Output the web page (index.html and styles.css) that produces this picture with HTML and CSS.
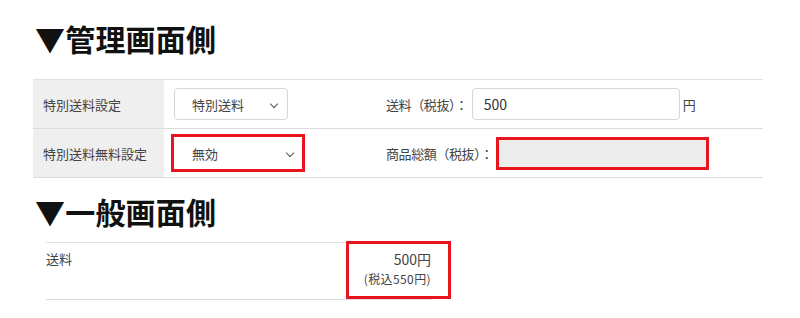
FILE: index.html
```html
<!DOCTYPE html>
<html lang="ja">
<head>
<meta charset="utf-8">
<link rel="stylesheet" href="styles.css">
</head>
<body>
<div class="page">
  <h2 class="heading">▼管理画面側</h2>
  <div class="admin">
    <div class="row">
      <div class="label">特別送料設定</div>
      <div class="content">
        <div class="left">
          <div class="select sel1">特別送料<span class="chev"></span></div>
        </div>
        <div class="right">
          <span class="field-label">送料（税抜）：</span>
          <div class="input">500</div>
          <span class="unit">円</span>
        </div>
      </div>
    </div>
    <div class="row">
      <div class="label">特別送料無料設定</div>
      <div class="content">
        <div class="left">
          <div class="select sel2 marked">無効<span class="chev"></span></div>
        </div>
        <div class="right">
          <span class="field-label">商品総額（税抜）：</span>
          <div class="disabled"></div>
        </div>
      </div>
    </div>
  </div>
  <h2 class="heading heading2">▼一般画面側</h2>
  <div class="front">
    <div class="front-label">送料</div>
    <div class="front-value">
      <div class="price">500円</div>
      <div class="tax">(税込550円)</div>
    </div>
    <div class="front-mark"></div>
  </div>
</div>
</body>
</html>
```

FILE: styles.css
```css
html, body {
  margin: 0;
  padding: 0;
  background: #fff;
}
body {
  font-family: "Noto Sans CJK JP", "Noto Sans", sans-serif;
  color: #444;
  width: 800px;
  height: 318px;
  overflow: hidden;
}
.page {
  padding: 20px 37px 0 33px;
}
.heading {
  margin: 0 0 23px 2px;
  font-size: 30px;
  line-height: 36px;
  font-weight: bold;
  color: #111;
  letter-spacing: 0.2px;
}
.heading2 {
  margin: 15px 0 13px 2px;
}
.admin {
  width: 730px;
  border-top: 1px solid #e2e2e2;
}
.row {
  display: flex;
  height: 48px;
  border-bottom: 1px solid #dcdcdc;
}
.label {
  width: 131px;
  background: #efefef;
  font-size: 13px;
  display: flex;
  align-items: center;
  padding-left: 10px;
  box-sizing: border-box;
}
.content {
  flex: 1;
  display: flex;
  align-items: center;
  padding-left: 10px;
  font-size: 13px;
}
.left {
  width: 212px;
  display: flex;
  align-items: center;
}
.select {
  position: relative;
  height: 32px;
  box-sizing: border-box;
  border: 1px solid #d6d6d6;
  border-radius: 4px;
  background: #fff;
  padding-left: 17px;
  display: flex;
  align-items: center;
  font-size: 13px;
  color: #444;
}
.sel1 { width: 114px; }
.sel2 { width: 128px; }
.marked {
  outline: 3px solid #e8141f;
  border-color: #fff;
  border-radius: 0;
}
.chev {
  position: absolute;
  top: 12px;
  width: 5px;
  height: 5px;
  border-right: 1.5px solid #555;
  border-bottom: 1.5px solid #555;
  transform: rotate(45deg);
}
.sel1 .chev { right: 10px; }
.sel2 .chev { right: 8px; }
.right {
  display: flex;
  align-items: center;
}
.field-label {
  font-size: 13px;
  letter-spacing: -0.4px;
  margin-right: 4px;
}
.input {
  width: 208px;
  height: 32px;
  box-sizing: border-box;
  border: 1px solid #d6d6d6;
  border-radius: 4px;
  padding-left: 11px;
  font-size: 14px;
  display: flex;
  align-items: center;
  color: #333;
}
.unit {
  margin-left: 3px;
  font-size: 13px;
}
.disabled {
  width: 213px;
  height: 33px;
  box-sizing: border-box;
  border: 3px solid #e8141f;
  background: #ececec;
  margin-left: -1px;
}
.front {
  position: relative;
  width: 386px;
  margin-left: 13px;
  height: 56px;
  border-top: 1px solid #e2e2e2;
  border-bottom: 1px solid #dcdcdc;
  display: flex;
  justify-content: space-between;
}
.front-label {
  font-size: 13px;
  padding-top: 6px;
}
.front-value {
  text-align: right;
  padding-top: 6px;
  padding-right: 1px;
}
.price {
  font-size: 14px;
  line-height: 20px;
  color: #444;
}
.tax {
  font-size: 12px;
  line-height: 18px;
  margin-top: 1px;
  letter-spacing: 0.4px;
}
.front-mark {
  position: absolute;
  left: 300px;
  top: -2px;
  width: 105px;
  height: 58px;
  box-sizing: border-box;
  border: 3px solid #e8141f;
}
```
